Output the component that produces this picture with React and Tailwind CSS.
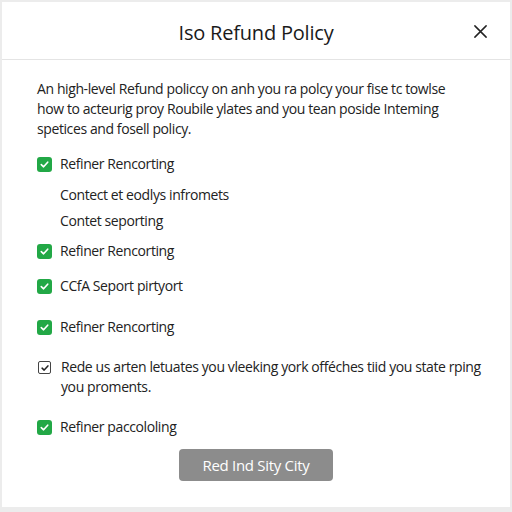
import React from 'react'

const GreenCheck = () => (
    <span className="w-[15px] h-[15px] rounded-[3px] bg-[#22a846] flex items-center justify-center shrink-0">
        <svg width="11" height="11" viewBox="0 0 12 12" fill="none">
            <path d="M2.5 6.2 L5 8.5 L9.5 3.5" stroke="white" strokeWidth="1.8" strokeLinecap="round" strokeLinejoin="round" />
        </svg>
    </span>
)

const OutlineCheck = () => (
    <span className="w-[13px] h-[13px] rounded-[2px] border border-[#444] bg-white flex items-center justify-center shrink-0">
        <svg width="10" height="10" viewBox="0 0 12 12" fill="none">
            <path d="M2.5 6.2 L5 8.5 L9.5 3.5" stroke="#222" strokeWidth="1.8" strokeLinecap="round" strokeLinejoin="round" />
        </svg>
    </span>
)

const CheckRow = ({ label, className = '' }) => (
    <div className={`flex items-center gap-[8px] ${className}`}>
        <GreenCheck />
        <span>{label}</span>
    </div>
)

export default function App() {
    return (
        <div className="w-[512px] h-[512px] bg-[#ececec] p-[2px] pb-[5px]"
            style={{ fontFamily: '"Open Sans", "Liberation Sans", sans-serif' }}>
            <div className="h-full bg-white flex flex-col text-[#222]">
                <div className="h-[58px] border-b border-[#e4e4e4] flex items-center justify-center relative shrink-0">
                    <h1 className="text-[20px] text-[#1a1a1a] tracking-[-0.2px] mt-[4px]">Iso Refund Policy</h1>
                    <button className="absolute right-[22px] top-[22px] text-[#222]">
                        <svg width="15" height="15" viewBox="0 0 16 16" fill="none">
                            <path d="M2 2 L14 14 M14 2 L2 14" stroke="#222" strokeWidth="1.6" strokeLinecap="round" />
                        </svg>
                    </button>
                </div>

                <div className="px-[35px] pt-[19px] text-[14px] leading-[20px] tracking-[-0.4px]">
                    <p>
                        An high-level Refund policcy on anh you ra polcy your fise tc towlse
                        how to acteurig proy Roubile ylates and you tean poside Inteming
                        spetices and fosell policy.
                    </p>

                    <div className="mt-[15px] flex flex-col">
                        <CheckRow label="Refiner Rencorting" />
                        <div className="pl-[23px] mt-[11px]">Contect et eodlys infromets</div>
                        <div className="pl-[23px] mt-[6px]">Contet seporting</div>
                        <CheckRow label="Refiner Rencorting" className="mt-[10px]" />
                        <CheckRow label="CCfA Seport pirtyort" className="mt-[15px]" />
                        <CheckRow label="Refiner Rencorting" className="mt-[21px]" />
                        <div className="flex items-start gap-[10px] mt-[20px]">
                            <span className="mt-[4px] ml-[1px]"><OutlineCheck /></span>
                            <span className="whitespace-nowrap">
                                Rede us arten letuates you vleeking york offéches tiid you state rping
                                <br />
                                you proments.
                            </span>
                        </div>
                        <CheckRow label="Refiner paccololing" className="mt-[20px]" />
                    </div>

                    <div className="flex justify-center mt-[12px]">
                        <button className="w-[154px] h-[32px] rounded-[4px] bg-[#8c8c8c] text-white text-[15px] tracking-[-0.3px]">
                            Red Ind Sity City
                        </button>
                    </div>
                </div>
            </div>
        </div>
    )
}
